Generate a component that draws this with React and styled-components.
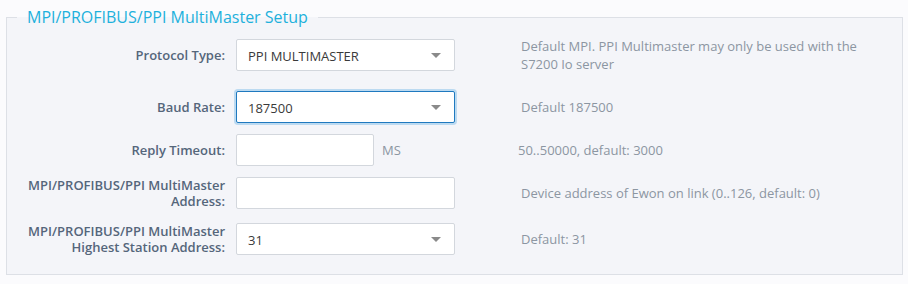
import styled, { createGlobalStyle } from 'styled-components';

const GlobalStyle = createGlobalStyle`
  html, body {
    margin: 0;
    padding: 0;
    background: #fbfbfd;
    font-family: "Open Sans", "Liberation Sans", sans-serif;
  }
`;

const rows = [
  {
    label: 'Protocol Type:',
    kind: 'select',
    value: 'PPI MULTIMASTER',
    help: 'Default MPI. PPI Multimaster may only be used with the S7200 Io server',
    top: 0,
  },
  { label: 'Baud Rate:', kind: 'select', value: '187500', focused: true, help: 'Default 187500', top: 18 },
  { label: 'Reply Timeout:', kind: 'input', unit: 'MS', help: '50..50000, default: 3000', top: 11 },
  {
    label: 'MPI/PROFIBUS/PPI MultiMaster Address:',
    kind: 'input',
    wide: true,
    help: 'Device address of Ewon on link (0..126, default: 0)',
    top: 11,
  },
  {
    label: 'MPI/PROFIBUS/PPI MultiMaster Highest Station Address:',
    kind: 'select',
    value: '31',
    help: 'Default: 31',
    top: 14,
  },
];

const App = () => {
  return (
    <Page>
      <GlobalStyle />
      <Fieldset>
        <Legend>MPI/PROFIBUS/PPI MultiMaster Setup</Legend>
        {rows.map((row, index) => (
          <Row key={index} $top={row.top}>
            <Label>{row.label}</Label>
            <Control>
              {row.kind === 'select' ? (
                <Select $focused={row.focused}>
                  <span>{row.value}</span>
                  <Caret />
                </Select>
              ) : (
                <>
                  <TextBox $wide={row.wide} />
                  {row.unit && <Unit>{row.unit}</Unit>}
                </>
              )}
            </Control>
            <Help $tight={!!row.unit}>{row.help}</Help>
          </Row>
        ))}
      </Fieldset>
    </Page>
  );
};

export default App;

const Page = styled.div`
  padding: 6px 5px 0 6px;
  height: 284px;
  box-sizing: border-box;
`;

const Fieldset = styled.fieldset`
  margin: 0;
  padding: 9px 0 19px 0;
  border: 1px solid #dde0e6;
  background: #f4f5f9;
  min-width: 0;
`;

const Legend = styled.legend`
  margin-left: 10px;
  padding: 0 10px;
  font-size: 16px;
  line-height: 22px;
  color: #1eb1dc;
`;

const Row = styled.div`
  display: grid;
  grid-template-columns: 218px 219px 1fr;
  column-gap: 11px;
  align-items: center;
  min-height: 32px;
  margin-top: ${p => p.$top}px;
`;

const Label = styled.div`
  text-align: right;
  font-size: 13px;
  line-height: 16px;
  font-weight: 600;
  color: #55667b;
`;

const Control = styled.div`
  display: flex;
  align-items: center;
`;

const Select = styled.div`
  box-sizing: border-box;
  width: 219px;
  height: 32px;
  display: flex;
  align-items: center;
  justify-content: space-between;
  padding: 1px 13px 0 11px;
  background: #fff;
  border: 1px solid ${p => (p.$focused ? '#1f79bf' : '#d3d7dd')};
  box-shadow: ${p => (p.$focused ? '0 0 0 2px #bcdaf1' : 'none')};
  border-radius: 2px;
  font-size: 13px;
  color: #3a3a3a;
`;

const Caret = styled.span`
  width: 0;
  height: 0;
  border-left: 5px solid transparent;
  border-right: 5px solid transparent;
  border-top: 5px solid #8a8a8a;
`;

const TextBox = styled.div`
  box-sizing: border-box;
  width: ${p => (p.$wide ? 219 : 138)}px;
  height: 32px;
  background: #fff;
  border: 1px solid #d3d7dd;
  border-radius: 2px;
`;

const Unit = styled.span`
  margin-left: 8px;
  font-size: 13px;
  color: #8c96a2;
`;

const Help = styled.div`
  padding-left: ${p => (p.$tight ? 52 : 55)}px;
  padding-right: 20px;
  font-size: 13px;
  line-height: 18px;
  color: #8c96a2;
`;
